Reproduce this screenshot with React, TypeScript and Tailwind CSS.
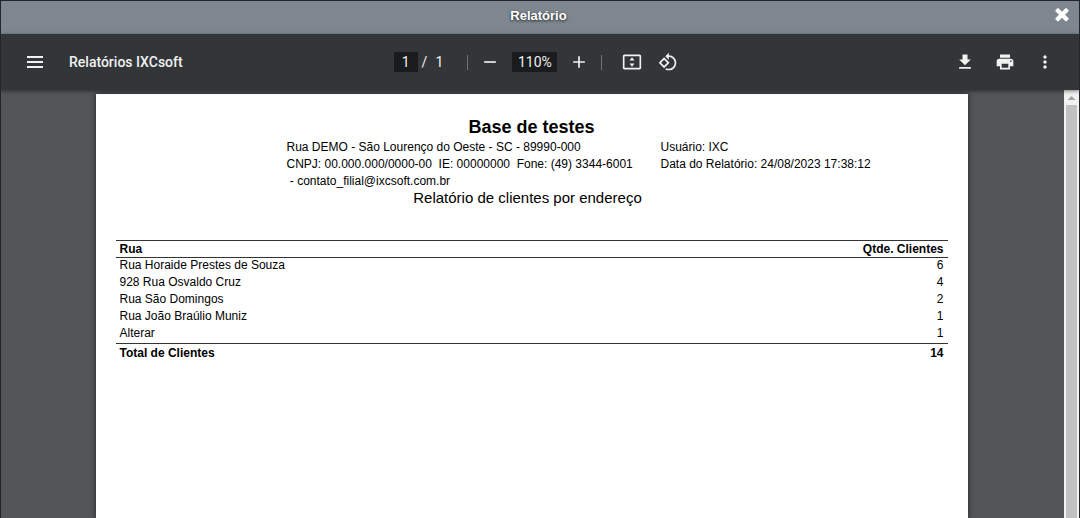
import type { ReactNode } from "react"
import {
  MdAdd,
  MdMoreVert,
  MdPrint,
  MdRemove,
  MdRotate90DegreesCcw,
} from "react-icons/md"

const rows = [
  { street: "Rua Horaide Prestes de Souza", count: 6 },
  { street: "928 Rua Osvaldo Cruz", count: 4 },
  { street: "Rua São Domingos", count: 2 },
  { street: "Rua João Braúlio Muniz", count: 1 },
  { street: "Alterar", count: 1 },
]

function IconButton({ label, children }: { label: string; children: ReactNode }) {
  return (
    <button
      type="button"
      aria-label={label}
      className="flex size-8 items-center justify-center rounded-full
        text-[#f1f1f1] hover:bg-white/10"
    >
      {children}
    </button>
  )
}

function TitleBar() {
  return (
    <header className="flex h-[33px] shrink-0 items-center bg-[#7e8790] pr-[7px] pl-6">
      <h1
        className="flex-1 pb-1 text-center font-['Liberation_Sans',Arial,sans-serif]
          text-[13px] font-bold text-white
          [text-shadow:0_1px_3px_rgba(0,0,0,0.8)]"
      >
        Relatório
      </h1>
      <button type="button" aria-label="Fechar" className="pb-2 text-white">
        <svg viewBox="0 0 1792 1792" className="size-5" fill="currentColor">
          <path d="M1490 1322q0 40-28 68l-136 136q-28 28-68 28t-68-28l-294-294-294 294q-28 28-68 28t-68-28l-136-136q-28-28-28-68t28-68l294-294-294-294q-28-28-28-68t28-68l136-136q28-28 68-28t68 28l294 294 294-294q28-28 68-28t68 28l136 136q28 28 28 68t-28 68l-294 294 294 294q28 28 28 68z" />
        </svg>
      </button>
    </header>
  )
}

function Toolbar() {
  return (
    <div
      className="relative z-10 flex h-14 shrink-0 items-center bg-[#323639]
        px-[18px] font-[Roboto,sans-serif] text-sm text-[#f1f1f1]
        shadow-[0_1px_4px_rgba(0,0,0,0.5)]"
    >
      <div className="flex flex-1 items-center gap-[18px]">
        <IconButton label="Menu">
          <svg viewBox="0 0 20 20" className="size-5" fill="currentColor">
            <path d="M2 4h16v2H2zM2 9h16v2H2zM2 14h16v2H2z" />
          </svg>
        </IconButton>
        <span className="font-medium">Relatórios IXCsoft</span>
      </div>

      <div className="flex items-center gap-1.5 pr-0.5">
        <div className="flex items-center gap-1">
          <input
            aria-label="Página"
            defaultValue="1"
            className="h-5 w-6 bg-[#191b1c] text-center outline-none"
          />
          <span>/</span>
          <span className="w-[30px] pl-1">1</span>
        </div>
        <span className="h-[15px] w-px bg-white/30" />
        <IconButton label="Diminuir zoom">
          <MdRemove className="size-5" />
        </IconButton>
        <input
          aria-label="Zoom"
          defaultValue="110%"
          className="h-5 w-[45px] bg-[#191b1c] text-center outline-none"
        />
        <IconButton label="Aumentar zoom">
          <MdAdd className="size-5" />
        </IconButton>
        <span className="h-[15px] w-px bg-white/30" />
        <div className="flex gap-1 pl-2">
          <IconButton label="Ajustar à página">
            <svg viewBox="0 0 24 24" className="size-5" fill="currentColor">
              <path d="M21 3H3c-1.1 0-2 .9-2 2v14c0 1.1.9 2 2 2h18c1.1 0 2-.9 2-2V5c0-1.1-.9-2-2-2zm0 16H3V5h18v14z" />
              <path d="M12 6.2 15 10.2H9zM12 17.8 9 13.8h6z" />
            </svg>
          </IconButton>
          <IconButton label="Girar">
            <MdRotate90DegreesCcw className="size-5" />
          </IconButton>
        </div>
      </div>

      <div className="flex flex-1 justify-end gap-2">
        <IconButton label="Baixar">
          <svg viewBox="0 0 24 24" className="size-5" fill="currentColor">
            <path d="M19 9h-4V3H9v6H5l7 7 7-7zM5 18v2h14v-2H5z" />
          </svg>
        </IconButton>
        <IconButton label="Imprimir">
          <MdPrint className="size-5" />
        </IconButton>
        <IconButton label="Mais ações">
          <MdMoreVert className="size-5" />
        </IconButton>
      </div>
    </div>
  )
}

function ReportHeader() {
  return (
    <div>
      <h2 className="text-center text-lg leading-5 font-bold">Base de testes</h2>
      <div className="flex pt-0.5 pl-[171px] leading-[17px] whitespace-pre">
        <div className="w-[374px]">
          <p>Rua DEMO - São Lourenço do Oeste - SC - 89990-000</p>
          <p>{"CNPJ: 00.000.000/0000-00  IE: 00000000  Fone: (49) 3344-6001"}</p>
          <p>{" - contato_filial@ixcsoft.com.br"}</p>
        </div>
        <div>
          <p>Usuário: IXC</p>
          <p>Data do Relatório: 24/08/2023 17:38:12</p>
        </div>
      </div>
      <p className="pr-2 text-center text-[15px] leading-4">
        Relatório de clientes por endereço
      </p>
    </div>
  )
}

function ReportTable() {
  return (
    <table className="mt-[34px] w-full border-collapse">
      <thead>
        <tr className="border-y border-[#333]">
          <th className="px-1 text-left leading-4">Rua</th>
          <th className="px-1 text-right leading-4">Qtde. Clientes</th>
        </tr>
      </thead>
      <tbody>
        {rows.map((row) => (
          <tr key={row.street}>
            <td className="px-1 pb-0.5 leading-[15px]">{row.street}</td>
            <td className="px-1 pb-0.5 text-right leading-[15px]">{row.count}</td>
          </tr>
        ))}
      </tbody>
      <tfoot>
        <tr className="border-t border-[#333] font-bold">
          <td className="px-1 leading-[18px]">Total de Clientes</td>
          <td className="px-1 text-right leading-[18px]">14</td>
        </tr>
      </tfoot>
    </table>
  )
}

function Scrollbar() {
  return (
    <div className="flex w-[15px] shrink-0 flex-col items-center bg-[#f1f1f1]">
      <svg viewBox="0 0 15 15" className="size-[15px] shrink-0">
        <path d="M3.5 10 7.5 6 11.5 10z" fill="#a3a3a3" />
      </svg>
      <div className="w-[11px] flex-1 bg-[#c1c1c1]" />
    </div>
  )
}

export default function App() {
  return (
    <div
      className="flex h-screen flex-col overflow-hidden border-x border-t
        border-[#222529] bg-[#525659]"
    >
      <TitleBar />
      <Toolbar />
      <div className="flex min-h-0 flex-1">
        <main className="flex flex-1 justify-center overflow-hidden pt-1 pr-0.5">
          <article
            className="w-full max-w-[872px] bg-white px-5 pt-[23px]
              font-['Liberation_Sans',Arial,sans-serif] text-xs text-black
              shadow-[0_0_6px_rgba(0,0,0,0.6)]"
          >
            <ReportHeader />
            <ReportTable />
          </article>
        </main>
        <Scrollbar />
      </div>
    </div>
  )
}
